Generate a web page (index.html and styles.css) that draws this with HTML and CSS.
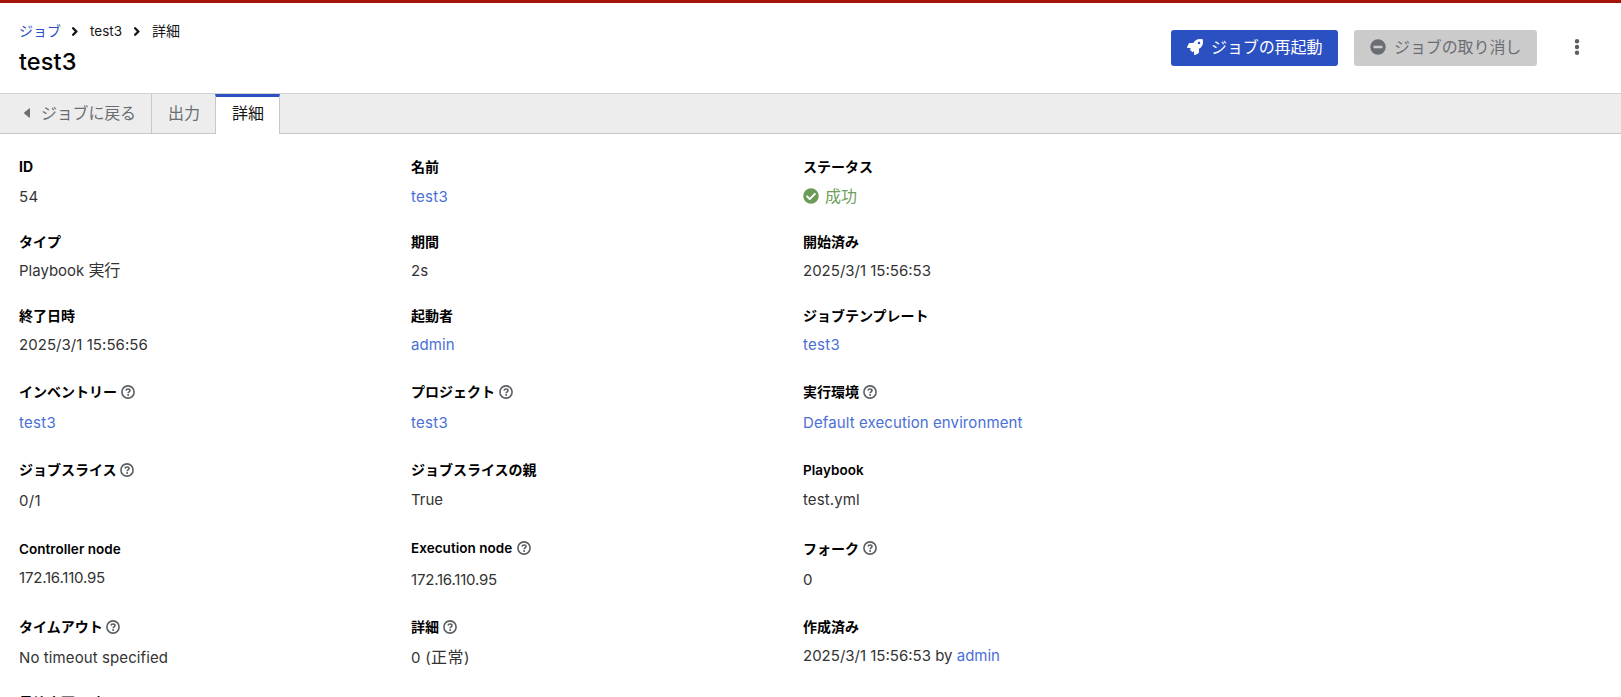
FILE: index.html
```html
<!DOCTYPE html>
<html lang="ja">
<head>
<meta charset="utf-8">
<title>test3 詳細</title>
<link rel="stylesheet" href="styles.css">
</head>
<body>
<svg width="0" height="0" class="defs">
  <symbol id="help" viewBox="0 0 14 14"><circle cx="7" cy="7" r="6.100" fill="none" stroke="currentColor" stroke-width="1.600"/><path d="M5 5.500C5.200 4.500 6 4 7 4c1.200 0 2 .7 2 1.600C9 6.800 7.100 6.900 7.100 8.200" fill="none" stroke="currentColor" stroke-width="1.600"/><circle cx="7.100" cy="10" r="1" fill="currentColor"/></symbol>
  <symbol id="chev" viewBox="32 96 208 320"><path fill="currentColor" d="M224.300 273l-136 136c-9.400 9.400-24.600 9.400-33.900 0l-22.600-22.600c-9.400-9.400-9.400-24.600 0-33.900l96.400-96.400-96.400-96.400c-9.400-9.400-9.400-24.600 0-33.900L54.300 103c9.400-9.400 24.600-9.400 33.900 0l136 136c9.500 9.400 9.500 24.600.1 34z"/></symbol>
</svg>
<header class="header">
  <div>
    <nav class="crumbs"><a href="#">ジョブ</a><svg class="chev"><use href="#chev"/></svg><span class="latin-crumb">test3</span><svg class="chev"><use href="#chev"/></svg><span class="here">詳細</span></nav>
    <h1 class="title">test3</h1>
  </div>
  <div class="actions">
    <button class="btn primary"><svg viewBox="0 0 512 512"><path fill="currentColor" d="M505.120 19.094c-1.189-5.531-6.658-11-12.207-12.188C460.716 0 435.507 0 410.407 0 307.175 0 245.269 55.203 199.052 128H94.838c-16.348.016-35.557 11.875-42.887 26.484L2.516 253.297A28.400 28.400 0 0 0 0 264a24.008 24.008 0 0 0 24.006 24h103.842l-22.474 22.469c-11.370 11.365-12.950 32.256 0 45.250l50.903 50.906c11.156 11.188 32.220 13.156 45.277 0L224 384.156V488a24.008 24.008 0 0 0 24.013 24 28.560 28.560 0 0 0 10.691-2.516l98.729-49.391c14.629-7.297 26.508-26.500 26.508-42.859V312.797c72.596-46.313 128.035-108.406 128.035-211.094.082-25.203.082-50.406-6.856-82.609zM384.041 168a40 40 0 1 1 40-40 40.023 40.023 0 0 1-40 40z"/></svg><span>ジョブの再起動</span></button>
    <button class="btn disabled"><svg viewBox="0 0 512 512"><path fill="currentColor" d="M256 8a248 248 0 1 0 0 496 248 248 0 0 0 0-496zM124 296c-6.600 0-12-5.400-12-12v-56c0-6.600 5.400-12 12-12h264c6.600 0 12 5.400 12 12v56c0 6.600-5.400 12-12 12z"/></svg><span>ジョブの取り消し</span></button>
    <button class="kebab"><svg viewBox="0 0 6 16"><g fill="currentColor"><circle cx="3" cy="2.300" r="2.200"/><circle cx="3" cy="8" r="2.200"/><circle cx="3" cy="13.700" r="2.200"/></g></svg></button>
  </div>
</header>
<nav class="tabs">
  <a class="tab back"><svg viewBox="0 0 6 10"><path fill="currentColor" d="M6 .8v8.400q0 1-.8.4L.4 5.700Q0 5 .4 4.300L5.200.4Q6-.2 6 .8z"/></svg>ジョブに戻る</a>
  <a class="tab output">出力</a>
  <a class="tab active">詳細</a>
</nav>
<main class="details">
  <dl class="item first"><dt>ID</dt><dd class="l">54</dd></dl>
  <dl class="item first"><dt>名前</dt><dd class="l"><a>test3</a></dd></dl>
  <dl class="item first"><dt>ステータス</dt><dd class="ok"><svg viewBox="0 0 512 512"><path fill="currentColor" d="M504 256a248 248 0 1 1-496 0 248 248 0 0 1 496 0zM227.314 387.314l184-184c6.248-6.248 6.248-16.379 0-22.627l-22.627-22.627c-6.248-6.249-16.379-6.249-22.628 0L216 308.118l-70.059-70.059c-6.248-6.248-16.379-6.248-22.628 0l-22.627 22.627c-6.248 6.248-6.248 16.379 0 22.627l104 104c6.249 6.249 16.379 6.249 22.628.001z"/></svg><span class="ok-text">成功</span></dd></dl>

  <dl class="item"><dt>タイプ</dt><dd>Playbook <span class="cjk">実行</span></dd></dl>
  <dl class="item"><dt>期間</dt><dd>2s</dd></dl>
  <dl class="item"><dt>開始済み</dt><dd>2025/3/1 15:56:53</dd></dl>

  <dl class="item"><dt>終了日時</dt><dd class="date">2025/3/1 15:56:56</dd></dl>
  <dl class="item"><dt>起動者</dt><dd class="admin"><a>admin</a></dd></dl>
  <dl class="item"><dt>ジョブテンプレート</dt><dd class="l"><a>test3</a></dd></dl>

  <dl class="item help"><dt>インベントリー<svg><use href="#help"/></svg></dt><dd class="l"><a>test3</a></dd></dl>
  <dl class="item help"><dt>プロジェクト<svg><use href="#help"/></svg></dt><dd class="l"><a>test3</a></dd></dl>
  <dl class="item help"><dt>実行環境<svg><use href="#help"/></svg></dt><dd class="long"><a>Default execution environment</a></dd></dl>

  <dl class="item help"><dt class="tight">ジョブスライス<svg><use href="#help"/></svg></dt><dd class="l">0/1</dd></dl>
  <dl class="item mid"><dt>ジョブスライスの親</dt><dd>True</dd></dl>
  <dl class="item mid"><dt class="lt">Playbook</dt><dd class="long">test.yml</dd></dl>

  <dl class="item low"><dt class="lt">Controller node</dt><dd class="ip">172.16.110.95</dd></dl>
  <dl class="item help"><dt class="lt">Execution node<svg><use href="#help"/></svg></dt><dd class="ip">172.16.110.95</dd></dl>
  <dl class="item help fork"><dt>フォーク<svg><use href="#help"/></svg></dt><dd class="l">0</dd></dl>

  <dl class="item help"><dt class="tight">タイムアウト<svg><use href="#help"/></svg></dt><dd class="long">No timeout specified</dd></dl>
  <dl class="item help"><dt>詳細<svg><use href="#help"/></svg></dt><dd class="l">0 (<span class="cjk wide">正常</span>)</dd></dl>
  <dl class="item"><dt>作成済み</dt><dd>2025/3/1 15:56:53 by <a>admin</a></dd></dl>

  <dl class="item"><dt>最終変更日時</dt></dl>
</main>
</body>
</html>
```
FILE: styles.css
```css
* { box-sizing: border-box; }
html, body { height: 100%; }
body {
  margin: 0;
  overflow: hidden;
  background: #fff;
  border-top: 3px solid #a3150c;
  color: #151515;
  font-family: Inter, "Noto Sans CJK JP", sans-serif;
  font-size: 15px;
}
.defs { position: absolute; }
a { color: #4a6fd6; text-decoration: none; }
.header {
  display: flex;
  justify-content: space-between;
  height: 90px;
  padding: 17px 36px 0 19px;
}
.crumbs { display: flex; align-items: center; height: 22px; font-size: 14px; color: #151515; }
.crumbs a { padding-bottom: 2px; color: #2b50c4; }
.here { padding-bottom: 2px; }
.chev { width: 6px; height: 9px; margin: 0 12px; }
.chev:first-of-type { margin-left: 11px; }
.latin-crumb { font-size: 13.500px; }
.title { margin: 4px 0 0; font-size: 23.500px; line-height: 32px; font-weight: 500; letter-spacing: .1px; color: #000; }
.actions { display: flex; align-items: flex-start; padding-top: 10px; }
.btn {
  display: flex;
  align-items: center;
  height: 36px;
  padding: 0 16px;
  border: 0;
  border-radius: 3px;
  font: 16px/24px "Noto Sans CJK JP", sans-serif;
}
.btn svg { width: 16px; height: 16px; margin: 0 8px 2px 0; flex: none; }
.btn span { padding-bottom: 4px; white-space: nowrap; letter-spacing: -.1px; }
.primary { width: 167px; background: #2b50c2; color: #fff; }
.disabled { width: 183px; margin-left: 16px; background: #cbcbcb; color: #6a6e73; }
.kebab { display: flex; align-items: center; justify-content: center; width: 16px; height: 36px; margin-left: 32px; padding: 0 0 2px; border: 0; background: none; color: #5b5e63; }
.kebab svg { width: 6px; height: 16px; }
.tabs { display: flex; height: 41px; background: #ededed; border-top: 1px solid #d2d2d2; border-bottom: 1px solid #c8c8c8; }
.tab { display: flex; align-items: center; padding: 0 16px 3px; border-right: 1px solid #c8c8c8; color: #6a6e73; font-size: 16px; white-space: nowrap; }
.back { width: 152px; padding-left: 24px; letter-spacing: -.2px; }
.back svg { width: 6px; height: 10px; margin: 2px 11px 0 0; flex: none; }
.output { width: 64px; }
.active { width: 65px; height: 40px; margin-left: -1px; border-top: 3px solid #2b50c2; border-left: 1px solid #c8c8c8; padding-bottom: 7px; background: #fff; color: #151515; }
.details {
  display: grid;
  grid-template-columns: repeat(3, 392px);
  grid-template-rows: 75px 74px 76px 78px 79px 78px 76px 30px;
  padding: 20px 0 0 19px;
}
.item { margin: 0; }
dt { display: flex; align-items: center; height: 24px; color: #000; font-size: 14px; font-weight: 700; white-space: nowrap; }
dt svg { width: 14px; height: 14px; margin: 1px 0 0 4px; color: #5b5e63; }
dd { display: flex; align-items: center; height: 24px; margin: 5px 0 0; color: #333; white-space: pre; font-size: 15px; }
.tight svg { margin-left: 3px; }
.lt { font-size: 13.500px; font-weight: 600; letter-spacing: .04px; }
.lt svg { margin: 0 0 0 5px; }
.fork svg { margin-top: 0; }
.first dd { margin-top: 6px; }
.help dd { margin-top: 7px; }
.mid dd { margin-top: 6px; }
.mid .lt { padding-top: 1px; }
.low { padding-top: 1px; }
.low dd { margin-top: 4px; }
.l { letter-spacing: .3px; }
.long { letter-spacing: .1px; }
.date { letter-spacing: .05px; }
.admin { letter-spacing: .1px; }
.ip { letter-spacing: -.2px; }
.cjk { padding-bottom: 2px; font-size: 16px; letter-spacing: -.2px; }
.wide { letter-spacing: .4px; }
.ok { font-size: 16px; color: #6ca05c; }
.ok svg { width: 16px; height: 16px; margin-right: 6px; color: #6c9a59; }
.ok-text { padding-bottom: 2px; }
```
